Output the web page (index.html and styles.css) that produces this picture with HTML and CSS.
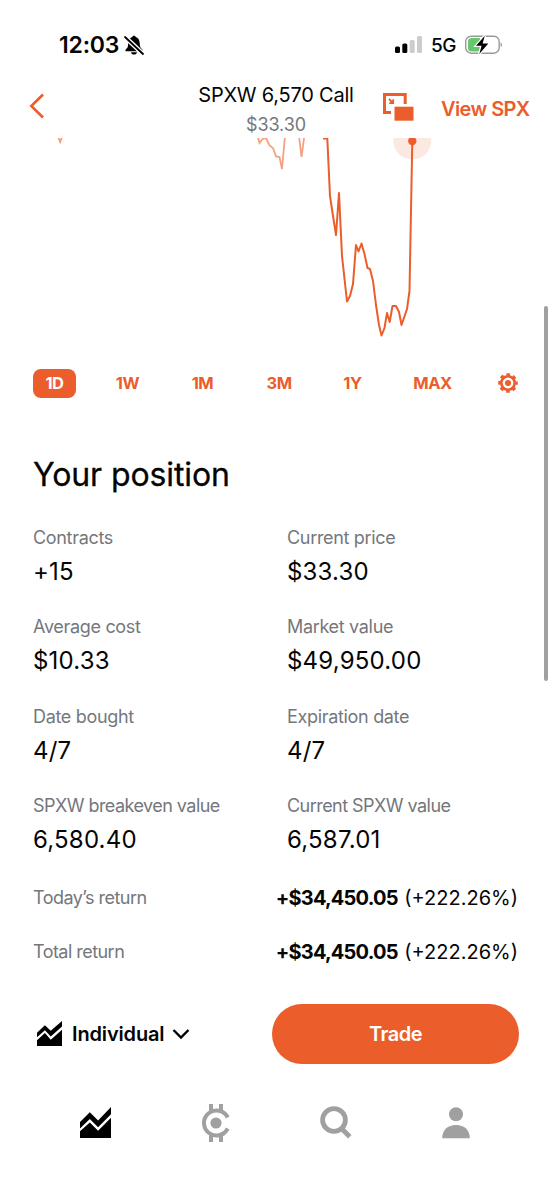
FILE: index.html
```html
<!DOCTYPE html>
<html lang="en">
<head>
<meta charset="utf-8">
<title>SPXW 6,570 Call</title>
<link rel="stylesheet" href="styles.css">
</head>
<body>
<div class="screen">
  <div class="status">
    <span class="clock">12:03</span>
    <svg class="bell" width="20" height="20" viewBox="0 0 20 20"><path d="M1.500 16.300v-1.600l2-2.300c.6-1 .6-2.500.7-4.400C4.500 4.500 6.200 2.600 8.300 2.100 8.500 1.200 9.100.7 10 .7s1.500.5 1.700 1.400c2.100.5 3.700 2.400 4 5.900.1 1.900.2 3.400.8 4.400l2 2.300v1.600z"/><path d="M7 17.200h6c-.3 1.500-1.400 2.300-3 2.300s-2.700-.8-3-2.300z"/><path class="gap" d="M1 2l18 17"/><path class="slash" d="M1 2l18 17"/></svg>
    <svg class="signal" width="28" height="18" viewBox="0 0 28 18"><rect x="0" y="10.500" width="5" height="6.500" rx="1.500"/><rect x="7.300" y="7.500" width="5" height="9.500" rx="1.500"/><g class="dim"><rect x="14.700" y="4" width="5" height="13" rx="1.500"/><rect x="22" y="0" width="5" height="17" rx="1.500"/></g></svg>
    <span class="network">5G</span>
    <svg class="battery" width="38" height="20" viewBox="0 0 38 20"><rect class="shell" x=".7" y="1.200" width="33.500" height="17" rx="5.500"/><path class="tip" d="M35.600 7.500c1.900.7 1.900 3.700 0 4.400z"/><path class="charge" d="M6.500 3H15v13.500H6.500A3.500 3.500 0 0 1 3 13V6.500A3.500 3.500 0 0 1 6.500 3z"/><path class="bolt" d="M19.800.8L11 10.700h5.600l-2.300 8.200 9-10.400h-5.700z"/></svg>
  </div>

  <header class="nav">
    <svg class="back" width="16" height="28" viewBox="0 0 16 28"><path d="M14 2.500L2.300 14 14 25.500"/></svg>
    <div class="heading">
      <div class="name">SPXW 6,570 Call</div>
      <div class="quote">$33.30</div>
    </div>
    <svg class="pip" width="31" height="28" viewBox="0 0 31 28"><path class="frame" d="M8 19.500H1.500v-18h20.700V11"/><path class="arrow" d="M6 6l4 4M10.200 6.200v4H6.200"/><path class="window" d="M11.500 13.700H30.500v14H11.500z"/></svg>
    <a class="view">View SPX</a>
  </header>

  <svg class="chart" width="552" height="212" viewBox="0 138 552 212">
    <path class="early" d="M57.800 136L60.200 142 62.500 136M257.500 136L259.500 143 263 138.500 266 138 269.500 145.500 273 148 276 156.500 279.500 157 282 169 285 136M299 136L301.500 157 304.300 136"/>
    <circle class="halo" cx="412.300" cy="140.500" r="19"/>
    <path class="line" d="M323 138.500H327.300L330 196 333 216 336 235 339 193 342 256 347 301.500 350 296 353 284 356 245 358.500 251.500 361.500 243.500 364.500 254 367.500 268 370 269 373 281 376 305 379 325 381.500 335.500 384.500 328 387 313 389.700 322 392.500 306H396L399 312 401.500 325 407 309 409.500 291 412.300 141"/>
    <circle class="dot" cx="412.300" cy="141" r="4.200"/>
  </svg>

  <div class="ranges">
    <span class="range on">1D</span><span class="range">1W</span><span class="range">1M</span><span class="range">3M</span><span class="range">1Y</span><span class="range">MAX</span>
    <svg class="gear" width="20" height="20" viewBox="-10 -10 20 20"><circle class="teeth" r="8.600"/><circle class="ring" r="6.700"/><circle class="hub" r="3"/></svg>
  </div>

  <h1>Your position</h1>
  <dl class="stats">
    <div><dt>Contracts</dt><dd>+15</dd></div>
    <div><dt>Current price</dt><dd>$33.30</dd></div>
    <div><dt>Average cost</dt><dd>$10.33</dd></div>
    <div><dt>Market value</dt><dd>$49,950.00</dd></div>
    <div><dt>Date bought</dt><dd>4/7</dd></div>
    <div><dt>Expiration date</dt><dd>4/7</dd></div>
    <div><dt class="tight">SPXW breakeven value</dt><dd>6,580.40</dd></div>
    <div><dt class="tight">Current SPXW value</dt><dd>6,587.01</dd></div>
  </dl>
  <div class="return"><span class="term tight">Today’s return</span><span class="gain"><b>+$34,450.05</b> (+222.26%)</span></div>
  <div class="return"><span class="term tight">Total return</span><span class="gain"><b>+$34,450.05</b> (+222.26%)</span></div>

  <div class="actions">
    <svg class="account-icon" width="25" height="25" viewBox="0 0 30 30"><path d="M0 14L9.500 5l7 6.800L30 0v6.500L16.500 18.500l-7-7.500L0 19.500z"/><path d="M0 23l9.500-8.500 7 8L30 10.500V30H0z"/></svg>
    <span class="account">Individual</span>
    <svg class="chevron" width="18" height="12" viewBox="0 0 18 12"><path d="M1.500 2L9 9.500 16.500 2"/></svg>
    <button class="trade">Trade</button>
  </div>

  <nav class="tabs">
    <svg width="31" height="31" viewBox="0 0 30 30"><path d="M0 14.500L9.500 5l8 8L30 0v7L17.500 19.500l-8-8L0 20.800z"/><path d="M0 23.500l9.500-8.500 8 8L30 10.500V30H0z"/></svg>
    <svg class="muted" width="30" height="38" viewBox="0 0 30 38"><path class="coin" d="M26.700 13.500A12.500 12.500 0 1 0 26.700 24.500"/><circle cx="15" cy="19" r="5.600"/><path d="M8 0h4v7H8zM18 0h4v7h-4zM8 31h4v7H8zM18 31h4v7h-4z"/></svg>
    <svg class="muted" width="32" height="33" viewBox="0 0 32 33"><circle class="lens" cx="14" cy="14" r="11.400"/><path class="handle" d="M21.500 22.500l8.300 8.300"/></svg>
    <svg class="muted" width="28" height="32" viewBox="0 0 28 32"><circle cx="14" cy="7.200" r="7"/><path d="M.2 31.300C.2 23 5.500 18 14 18s13.800 5 13.800 13.300z"/></svg>
  </nav>
  <div class="scrollbar"></div>
</div>
</body>
</html>
```
FILE: styles.css
```css
:root { --accent: #eb5d2a; --gray: #74777c; }
* { box-sizing: border-box; }
body { margin: 0; background: #fff; color: #050505; font-family: Inter, "Liberation Sans", sans-serif; }
.screen { position: relative; width: 552px; height: 1200px; overflow: hidden; white-space: nowrap; }
svg { display: block; flex: none; }

.status { display: flex; align-items: center; height: 78px; padding: 12px 49px 0 59px; }
.clock { font-size: 23px; font-weight: 600; width: 65px; letter-spacing: -.2px; }
.bell .gap { stroke: #fff; stroke-width: 4.500; }
.bell .slash { stroke: #000; stroke-width: 1.800; stroke-linecap: round; }
.signal { margin-left: auto; }
.signal .dim { fill: #ccc; }
.network { margin: 0 9px 0 8px; font-size: 19px; font-weight: 500; letter-spacing: -.5px; }
.shell { fill: none; stroke: #999; stroke-width: 1.400; }
.tip { fill: #999; }
.charge { fill: #66c76c; }
.bolt { stroke: #fff; stroke-width: 2.500; paint-order: stroke; }

.nav { display: grid; grid-template-columns: 168px 215px 58px 1fr; height: 60px; padding-right: 22px; color: var(--accent); }
.back { margin: 14px 0 0 29px; }
.back path { fill: none; stroke: var(--accent); stroke-width: 2.600; }
.heading { text-align: center; padding: 1px 0 0 1px; }
.name { color: #050505; font-size: 20px; line-height: 32px; letter-spacing: -.22px; }
.quote { color: var(--gray); font-size: 18px; line-height: 28px; letter-spacing: -.1px; }
.pip { margin-top: 15px; }
.frame { fill: none; stroke: var(--accent); stroke-width: 3; }
.arrow { fill: none; stroke: var(--accent); stroke-width: 1.800; }
.window { fill: var(--accent); }
.view { font-size: 20px; font-weight: 600; line-height: 63px; letter-spacing: -.6px; }

.early { fill: none; stroke: #f2a283; stroke-width: 1.800; }
.halo { fill: #fbe9e1; }
.line { fill: none; stroke: var(--accent); stroke-width: 2; stroke-linejoin: round; }
.dot { fill: var(--accent); }

.ranges { display: grid; grid-template-columns: 43px 103px 47px 106px 41px 119px 1fr; align-items: center; height: 30px; margin: 18px 34px 0 33px; }
.range { color: var(--accent); font-size: 16.500px; font-weight: 700; letter-spacing: -.4px; text-align: center; }
.range.on { height: 29px; border-radius: 8px; background: var(--accent); color: #fff; line-height: 29px; }
.gear { justify-self: end; }
.teeth { fill: none; stroke: var(--accent); stroke-width: 2.400; stroke-dasharray: 3.700 3.054; stroke-dashoffset: 1.850; }
.ring { fill: none; stroke: var(--accent); stroke-width: 2.600; }
.hub { fill: var(--accent); }

h1 { margin: 57px 33px 0; font-size: 32px; font-weight: 400; line-height: 40px; letter-spacing: -.1px; -webkit-text-stroke: .3px #050505; }
.stats { display: grid; grid-template-columns: 254px 1fr; grid-auto-rows: 89.300px; margin: 31px 33px -12.500px; }
dt, .term { color: var(--gray); font-size: 18px; line-height: 24px; letter-spacing: -.32px; }
.tight { letter-spacing: -.54px; }
dd { margin: 6px 0 0; font-size: 24px; line-height: 32px; letter-spacing: .2px; }
.return { display: flex; justify-content: space-between; align-items: center; height: 54.500px; padding: 0 34px 0 33px; }
.gain { font-size: 20px; }
.gain b { font-weight: 700; letter-spacing: -.8px; margin-right: 1px; }

.actions { display: flex; align-items: center; height: 60px; margin: 24px 33px 0 37px; }
.account { margin: 0 8px 0 10px; font-size: 20px; font-weight: 600; letter-spacing: -.15px; }
.chevron path { fill: none; stroke: #000; stroke-width: 2.400; }
.trade { width: 247px; height: 60px; margin-left: auto; border: 0; border-radius: 30px; background: var(--accent); color: #fff; font: 600 20px Inter, sans-serif; letter-spacing: -.5px; }

.tabs { display: flex; justify-content: space-between; align-items: center; height: 60px; margin: 29px 82px 0 80px; }
.muted { fill: #a0a0a0; }
.coin { fill: none; stroke: #a0a0a0; stroke-width: 4; }
.lens, .handle { fill: none; stroke: #a0a0a0; stroke-width: 4.800; }
.scrollbar { position: absolute; top: 306px; right: 4px; width: 4px; height: 375px; border-radius: 2px; background: #a0a0a0; }
```
